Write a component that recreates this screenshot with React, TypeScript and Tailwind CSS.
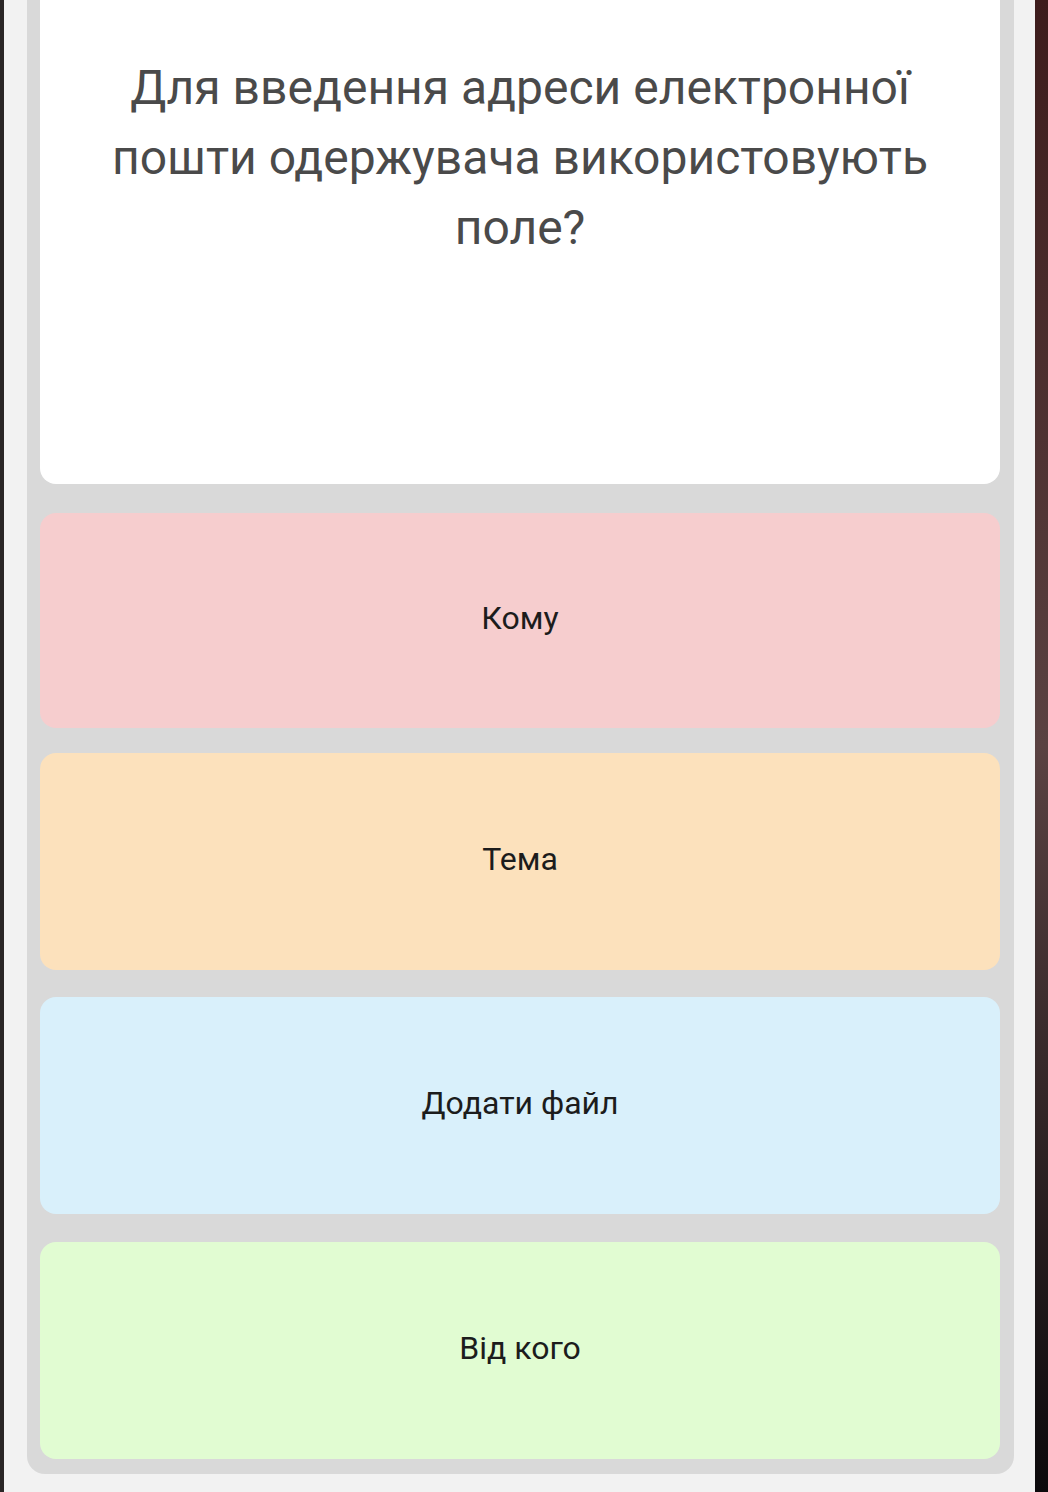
const answers = [
  { label: "Кому", cls: "mt-[29px] h-[215px] bg-[#f6cdce]" },
  { label: "Тема", cls: "mt-[25px] h-[217px] bg-[#fce1bc]" },
  { label: "Додати файл", cls: "mt-[27px] h-[217px] bg-[#d9f0fb]" },
  { label: "Від кого", cls: "mt-[28px] h-[217px] bg-[#e1fcd2]" },
];

export default function App() {
  return (
    <div className="flex w-[1048px] h-[1492px] overflow-hidden bg-[#f2f2f2] font-['Roboto',sans-serif]">
      <div className="w-[4px] bg-[#2a2626]" />
      <div className="flex-1 pl-[23px] pr-[21px]">
        <div className="flex flex-col bg-[#d9d9d9] rounded-b-[18px] pl-[13px] pr-[14px] pb-[15px]">
          <div className="h-[484px] bg-white rounded-b-[16px] pt-[53px] px-[50px]">
            <p className="text-center text-[48px] leading-[70px] text-[#4a4a4a]">
              Для введення адреси електронної пошти одержувача використовують поле?
            </p>
          </div>
          {answers.map((a) => (
            <div
              key={a.label}
              className={"flex items-center justify-center rounded-[16px] pb-[6px] text-[32px] text-[#1c1c1c] " + a.cls}
            >
              {a.label}
            </div>
          ))}
        </div>
      </div>
      <div className="w-[13px] bg-gradient-to-b from-[#3d1c1c] via-[#5a4242] to-[#0c0a0c]" />
    </div>
  );
}
